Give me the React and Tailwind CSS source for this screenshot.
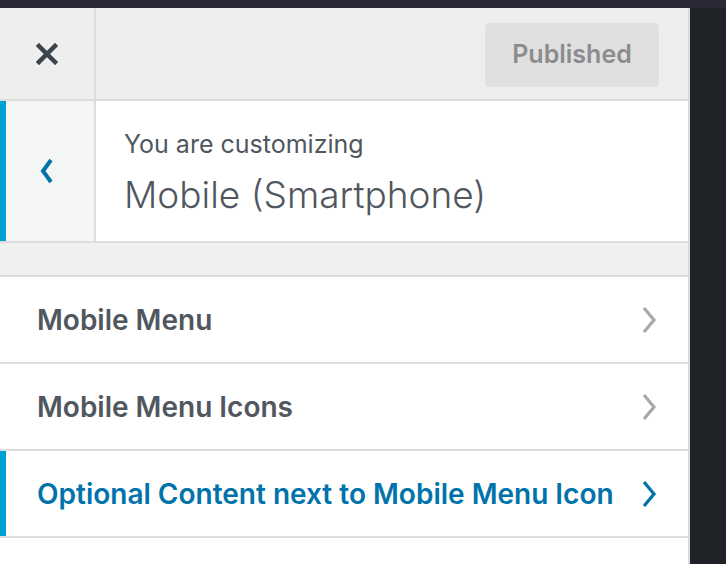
export default function App() {
  const items = [
    { label: 'Mobile Menu', active: false },
    { label: 'Mobile Menu Icons', active: false },
    { label: 'Optional Content next to Mobile Menu Icon', active: true },
  ];

  return (
    <div className="w-[726px] h-[564px] flex flex-col bg-[#1f2327] overflow-hidden" style={{ fontFamily: 'Inter, "Noto Sans", sans-serif' }}>
      <div className="h-[8px] bg-[#2a2935]" />
      <div className="flex flex-1 min-h-0">
        <div className="w-[690px] flex flex-col bg-white border-r-2 border-[#dcdcde]">
          {/* header */}
          <div className="h-[93px] flex bg-[#eeeeee] border-b-2 border-[#dddddd]">
            <div className="w-[96px] flex items-center justify-center border-r-2 border-[#dddddd]">
              <svg width="22" height="22" viewBox="0 0 22 22">
                <path d="M3 3 L19 19 M19 3 L3 19" stroke="#3c434a" strokeWidth="4.5" strokeLinecap="square" />
              </svg>
            </div>
            <div className="flex-1 flex items-center justify-end pr-[29px] pt-[2px]">
              <div className="w-[174px] h-[64px] rounded-[5px] bg-[#e0e0e0] flex items-center justify-center text-[25px] font-semibold text-[#8c8c8f]">
                Published
              </div>
            </div>
          </div>

          {/* customizing section */}
          <div className="h-[142px] flex border-b-2 border-[#dddddd]">
            <div className="w-[96px] flex bg-[#f4f6f6] border-r-2 border-[#dddddd]">
              <div className="w-[6px] bg-[#00a0d2]" />
              <div className="flex-1 flex items-center justify-center pr-[6px]">
                <svg width="14" height="26" viewBox="0 0 14 26">
                  <path d="M11 2 L3 13 L11 24" fill="none" stroke="#0073aa" strokeWidth="4" />
                </svg>
              </div>
            </div>
            <div className="flex-1 flex flex-col pl-[28px] pt-[28px]">
              <div className="text-[25px] leading-[30px] text-[#50575e]">You are customizing</div>
              <div className="text-[37px] leading-[44px] mt-[14px] font-light text-[#50575e]">Mobile (Smartphone)</div>
            </div>
          </div>

          {/* gap */}
          <div className="h-[34px] bg-[#f0f0f0] border-b-2 border-[#dddddd]" />

          {items.map((item) => (
            <div key={item.label} className="h-[87px] flex border-b-2 border-[#dddddd]">
              <div className={item.active ? 'w-[6px] bg-[#00a0d2]' : 'w-[6px]'} />
              <div className="flex-1 flex items-center justify-between pl-[31px] pr-[31px]">
                <span className={item.active ? 'text-[28px] font-semibold text-[#0073aa]' : 'text-[28px] font-semibold text-[#50575e]'}>
                  {item.label}
                </span>
                <svg width="16" height="28" viewBox="0 0 16 28">
                  <path d="M3 2 L13 14 L3 26" fill="none" stroke={item.active ? '#0073aa' : '#a7aaad'} strokeWidth="3.2" />
                </svg>
              </div>
            </div>
          ))}
        </div>
        <div className="flex-1 bg-[#1f2327]" />
      </div>
    </div>
  );
}
